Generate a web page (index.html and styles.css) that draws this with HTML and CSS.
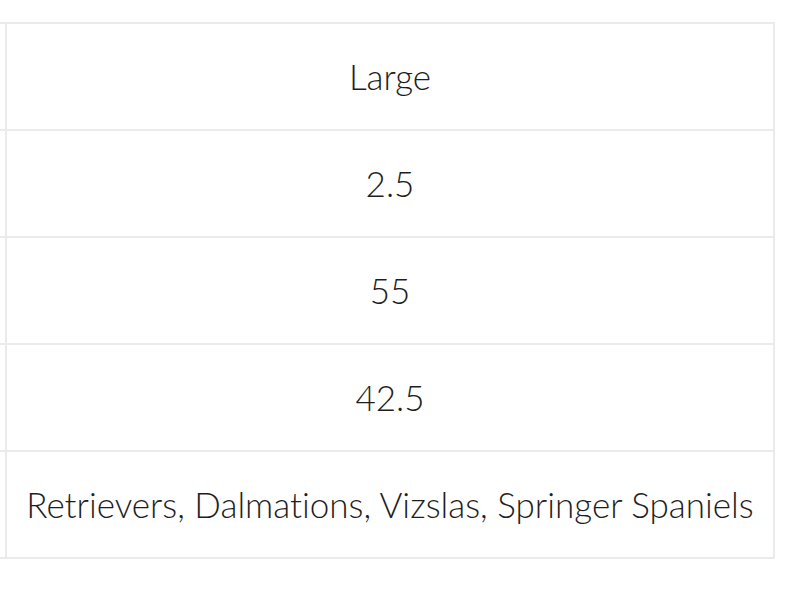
FILE: index.html
```html
<!DOCTYPE html>
<html>
<head>
<meta charset="utf-8">
<link rel="stylesheet" href="styles.css">
</head>
<body>
<table class="sizes">
  <tbody>
    <tr><td class="edge"></td><td class="cell">Large</td></tr>
    <tr><td class="edge"></td><td class="cell">2.5</td></tr>
    <tr><td class="edge"></td><td class="cell">55</td></tr>
    <tr><td class="edge"></td><td class="cell">42.5</td></tr>
    <tr class="last"><td class="edge"></td><td class="cell">Retrievers, Dalmations, Vizslas, Springer Spaniels</td></tr>
  </tbody>
</table>
</body>
</html>
```

FILE: styles.css
```css
html, body {
  margin: 0;
  padding: 0;
  background: #ffffff;
}

body {
  padding-top: 22px;
  font-family: "Lato", "Liberation Sans", sans-serif;
  color: #1e1e1e;
  overflow: hidden;
}

.sizes {
  border-collapse: separate;
  border-spacing: 0;
  width: 775px;
}

.sizes td {
  border-top: 2px solid #ebebeb;
  height: 103px;
  padding: 0 0 2px 0;
  box-sizing: content-box;
}

.sizes .last td {
  border-bottom: 2px solid #ebebeb;
}

.edge {
  width: 5px;
  border-right: 2px solid #ebebeb;
}

.cell {
  width: 766px;
  border-right: 2px solid #ebebeb;
  text-align: center;
  vertical-align: middle;
  font-size: 35px;
  font-weight: 300;
  line-height: 1.2;
  white-space: nowrap;
  font-variant-ligatures: none;
  font-feature-settings: "liga" 0;
}
```
